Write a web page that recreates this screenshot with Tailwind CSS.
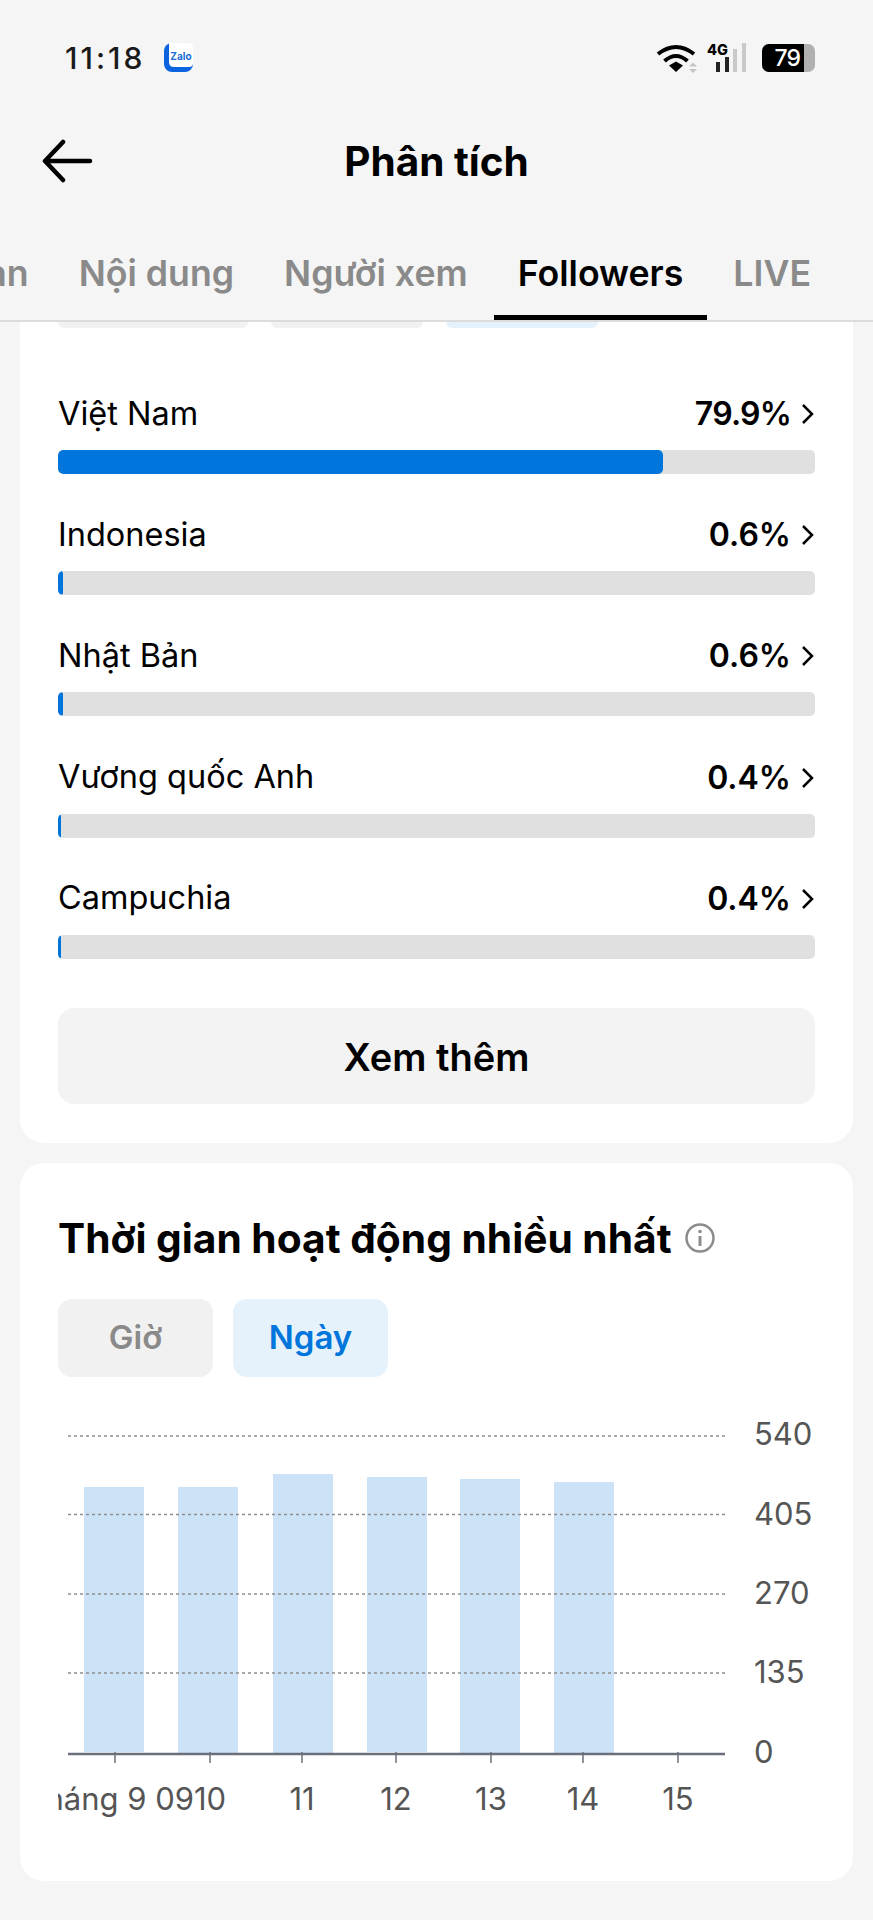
<!DOCTYPE html>
<html lang="vi">
<head>
  <meta charset="UTF-8">
  <meta name="viewport" content="width=device-width, initial-scale=1.0">
  <title>Phân tích</title>
  <script src="https://cdn.jsdelivr.net/npm/@tailwindcss/browser@4"></script>
</head>
<body class="bg-[#f5f5f5] font-['Inter',sans-serif] text-black">
<div class="w-[873px] h-[1920px] overflow-hidden">

  <!-- status bar -->
  <div class="h-[115px] flex items-center justify-between pl-[65px] pr-[58px]">
    <div class="flex items-center gap-[19px]">
      <span class="text-[30px] leading-none font-medium text-[#1a1a1a] tracking-[3px]">11:18</span>
      <svg width="29" height="29" viewBox="0 0 29 29">
        <rect width="29" height="29" rx="8" fill="#0b63e0"/>
        <path d="M5 0H24Q29 0 29 5V20Q29 24 25 24H10Q5 24 5 19Z" fill="#fff"/>
        <text x="17" y="17" text-anchor="middle" font-size="10" font-weight="700" fill="#1b6fd8" font-family="Inter">Zalo</text>
      </svg>
    </div>
    <div class="flex items-center">
      <svg width="42" height="30" viewBox="0 0 42 30" fill="none" stroke="#000" stroke-width="4">
        <path d="M2 11Q20 -3 38 11"/>
        <path d="M8.500 18Q20 8 31.500 18"/>
        <path d="M13 22.500L20 18.500L27 22.500L20 29Z" fill="#000" stroke="none"/>
        <path d="M33 23.500L37 19.500L41 23.500ZM33 26L37 30L41 26Z" fill="#c4c4c4" stroke="none"/>
      </svg>
      <svg width="40" height="30" viewBox="0 0 40 30" class="ml-[9px]">
        <text x="0" y="12" font-size="14.500" font-weight="800" font-family="Inter" fill="#000">4G</text>
        <rect x="9" y="19" width="4" height="10" fill="#222"/>
        <rect x="18" y="14" width="4" height="15" fill="#222"/>
        <rect x="26" y="6" width="4" height="23" fill="#c9c9c9"/>
        <rect x="35" y="0" width="4" height="29" fill="#c9c9c9"/>
      </svg>
      <div class="ml-[15px] flex h-[28px] w-[53px] rounded-[7px] overflow-hidden bg-[#b0b0b0]">
        <div class="w-[42px] h-full bg-black text-white text-[23px] leading-[28px] font-medium tracking-[-1px] text-right pr-[4px]">79</div>
      </div>
    </div>
  </div>

  <!-- title -->
  <div class="relative h-[95px] flex items-center justify-center">
    <svg class="absolute left-[40px] top-[24px]" width="56" height="44" viewBox="0 0 56 44" fill="none" stroke="#000" stroke-width="4.500" stroke-linecap="round" stroke-linejoin="round">
      <path d="M50 22H6M23 3L5 22L23 41"/>
    </svg>
    <h1 class="text-[40.500px] leading-none font-bold -mt-[1px]">Phân tích</h1>
  </div>

  <!-- tabs -->
  <div class="h-[112px] border-b-2 border-[#dcdcdc] flex gap-[2px] justify-end items-end overflow-hidden pr-[38px] text-[35.700px] font-semibold text-[#8a8a8a] whitespace-nowrap">
    <div class="shrink-0 px-[24px] h-[90px] pt-[21px] leading-[44px]">Tổng quan</div>
    <div class="shrink-0 px-[24px] h-[90px] pt-[21px] leading-[44px]">Nội dung</div>
    <div class="shrink-0 px-[24px] h-[90px] pt-[21px] leading-[44px]">Người xem</div>
    <div class="shrink-0 px-[24px] h-[90px] pt-[21px] leading-[44px] text-black border-b-[5px] border-black">Followers</div>
    <div class="shrink-0 px-[24px] h-[90px] pt-[21px] leading-[44px]">LIVE</div>
  </div>

  <!-- countries card -->
  <div class="mx-[20px] bg-white rounded-b-[24px] px-[38px] pb-[39px]">
    <div class="flex gap-[23px] mb-[66px]">
      <div class="w-[190px] h-[6px] rounded-b-[10px] bg-[#f1f1f1]"></div>
      <div class="w-[152px] h-[6px] rounded-b-[10px] bg-[#f1f1f1]"></div>
      <div class="w-[152px] h-[6px] rounded-b-[10px] bg-[#e5f2fc]"></div>
    </div>

    <div class="flex flex-col gap-[41.200px]">
      <div>
        <div class="flex items-center justify-between h-[40px] text-[32.500px]">
          <span>Việt Nam</span>
          <span class="flex items-center font-semibold text-[32px] tracking-[-0.800px]">79.9%
            <svg class="ml-[10px]" width="14" height="22" viewBox="0 0 14 22" fill="none" stroke="#000" stroke-width="2.500"><path d="M2 2L11 11L2 20"/></svg>
          </span>
        </div>
        <div class="mt-[16px] h-[24px] rounded-[5px] bg-[#e0e0e0] overflow-hidden"><div class="h-full rounded-[5px] bg-[#0075db]" style="width:79.9%"></div></div>
      </div>
      <div>
        <div class="flex items-center justify-between h-[40px] text-[32.500px]">
          <span>Indonesia</span>
          <span class="flex items-center font-semibold text-[32px]">0.6%
            <svg class="ml-[10px]" width="14" height="22" viewBox="0 0 14 22" fill="none" stroke="#000" stroke-width="2.500"><path d="M2 2L11 11L2 20"/></svg>
          </span>
        </div>
        <div class="mt-[16px] h-[24px] rounded-[5px] bg-[#e0e0e0] overflow-hidden"><div class="h-full rounded-[5px] bg-[#0075db]" style="width:0.6%"></div></div>
      </div>
      <div>
        <div class="flex items-center justify-between h-[40px] text-[32.500px]">
          <span>Nhật Bản</span>
          <span class="flex items-center font-semibold text-[32px]">0.6%
            <svg class="ml-[10px]" width="14" height="22" viewBox="0 0 14 22" fill="none" stroke="#000" stroke-width="2.500"><path d="M2 2L11 11L2 20"/></svg>
          </span>
        </div>
        <div class="mt-[16px] h-[24px] rounded-[5px] bg-[#e0e0e0] overflow-hidden"><div class="h-full rounded-[5px] bg-[#0075db]" style="width:0.6%"></div></div>
      </div>
      <div>
        <div class="flex items-center justify-between h-[40px] text-[32.500px]">
          <span>Vương quốc Anh</span>
          <span class="flex items-center font-semibold text-[32px]">0.4%
            <svg class="ml-[10px]" width="14" height="22" viewBox="0 0 14 22" fill="none" stroke="#000" stroke-width="2.500"><path d="M2 2L11 11L2 20"/></svg>
          </span>
        </div>
        <div class="mt-[16px] h-[24px] rounded-[5px] bg-[#e0e0e0] overflow-hidden"><div class="h-full rounded-[5px] bg-[#0075db]" style="width:0.4%"></div></div>
      </div>
      <div>
        <div class="flex items-center justify-between h-[40px] text-[32.500px]">
          <span>Campuchia</span>
          <span class="flex items-center font-semibold text-[32px]">0.4%
            <svg class="ml-[10px]" width="14" height="22" viewBox="0 0 14 22" fill="none" stroke="#000" stroke-width="2.500"><path d="M2 2L11 11L2 20"/></svg>
          </span>
        </div>
        <div class="mt-[16px] h-[24px] rounded-[5px] bg-[#e0e0e0] overflow-hidden"><div class="h-full rounded-[5px] bg-[#0075db]" style="width:0.4%"></div></div>
      </div>
    </div>

    <div class="mt-[49px] h-[96px] rounded-[16px] bg-[#f3f3f3] flex items-center justify-center pt-[4px] text-[38px] font-semibold">Xem thêm</div>
  </div>

  <!-- active time card -->
  <div class="mx-[20px] mt-[20px] bg-white rounded-[24px] px-[38px] pt-[51px] pb-[61px]">
    <div class="flex items-center h-[48px]">
      <h2 class="text-[40.700px] leading-none font-bold whitespace-nowrap mt-[3px]">Thời gian hoạt động nhiều nhất</h2>
      <svg class="ml-[12px]" width="32" height="32" viewBox="0 0 32 32" fill="none" stroke="#8c8c8c" stroke-width="2.500">
        <circle cx="16" cy="16" r="13.500"/>
        <path d="M16 14V24" stroke-width="3"/>
        <circle cx="16" cy="9.500" r="1.800" fill="#8c8c8c" stroke="none"/>
      </svg>
    </div>

    <div class="mt-[37px] flex gap-[20px] text-[33px] font-semibold">
      <div class="w-[155px] h-[78px] rounded-[14px] bg-[#f1f1f1] text-[#8a8a8a] flex items-center justify-center">Giờ</div>
      <div class="w-[155px] h-[78px] rounded-[14px] bg-[#e5f2fc] text-[#0075db] flex items-center justify-center">Ngày</div>
    </div>

    <svg class="mt-[43px] block" width="758" height="400" viewBox="0 0 758 400" font-family="Inter" fill="#555">
      <clipPath id="xclip"><rect x="0" y="340" width="170" height="60"/></clipPath>
      <g fill="#cce2f6">
        <rect x="26" y="67" width="60" height="265"/>
        <rect x="120" y="67" width="60" height="267"/>
        <rect x="215" y="54" width="60" height="279"/>
        <rect x="309" y="57" width="60" height="275"/>
        <rect x="402" y="59" width="60" height="274"/>
        <rect x="496" y="62" width="60" height="271"/>
      </g>
      <g stroke="#8e8e8e" stroke-width="1.500" stroke-dasharray="3 3">
        <path d="M10 16H667M10 94.500H667M10 174H667M10 253H667"/>
      </g>
      <path d="M10 334H667" stroke="#6b6f7b" stroke-width="2.500"/>
      <path d="M57 332V343M152 332V343M244 332V343M338 332V343M433 332V343M525 332V343M620 332V343" stroke="#6b6f7b" stroke-width="1.500"/>
      <g font-size="31">
        <text x="696" y="25">540</text>
        <text x="696" y="105">405</text>
        <text x="696" y="184">270</text>
        <text x="696" y="263">135</text>
        <text x="696" y="343">0</text>
      </g>
      <g font-size="31" text-anchor="middle">
        <text x="136" y="390" text-anchor="end" clip-path="url(#xclip)">tháng 9 09</text>
        <text x="152" y="390">10</text>
        <text x="244" y="390">11</text>
        <text x="338" y="390">12</text>
        <text x="433" y="390">13</text>
        <text x="525" y="390">14</text>
        <text x="620" y="390">15</text>
      </g>
    </svg>
  </div>
</div>
</body>
</html>
